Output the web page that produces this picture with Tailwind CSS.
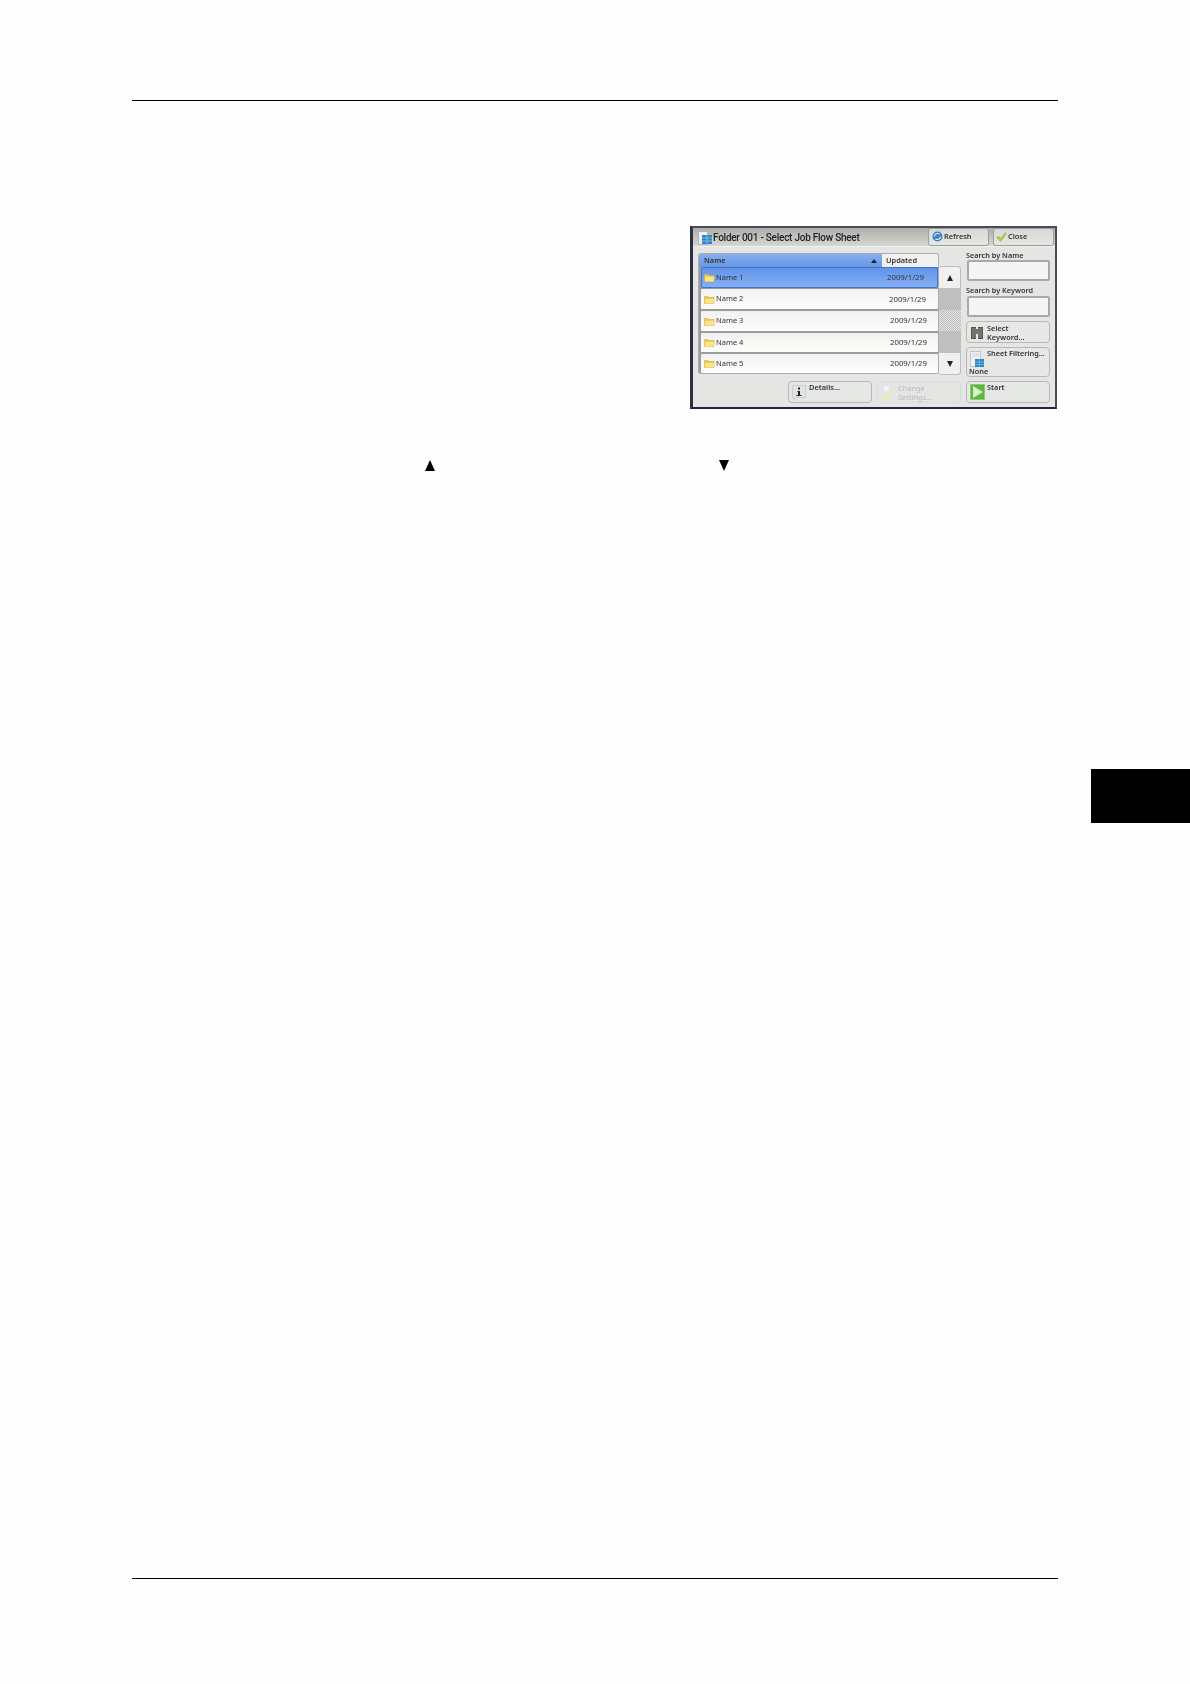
<!DOCTYPE html>
<html>
<head>
<meta charset="utf-8">
<script src="https://cdn.jsdelivr.net/npm/@tailwindcss/browser@4"></script>
</head>
<body class="bg-[#fefefe] font-['Noto_Sans',sans-serif]">
<div class="w-[1190px] h-[1684px] overflow-hidden pt-[100px] flex flex-col text-[#333]">
  <div class="ml-[132px] w-[926px] h-px shrink-0 bg-black"></div>

  <!-- device panel -->
  <div class="ml-[690px] mt-[125px] w-[367px] h-[183px] shrink-0 border-t-2 border-l-[3px] border-r-2 border-b-2 border-t-[#4a4c54] border-l-[#2c3244] border-r-[#4a4e5c] border-b-[#20263c] bg-[#e5e6e4] flex flex-col blur-[0.4px]">
    <!-- title bar -->
    <div class="h-[19px] shrink-0 flex items-center bg-gradient-to-b from-[#aeaeaa] to-[#d6d6d2] border-b border-[#f0f0ee]">
      <svg class="ml-[5px] mt-[2px] w-[15px] h-[14px] shrink-0" viewBox="0 0 15 14">
        <rect x="0.5" y="0.5" width="9" height="13" fill="#eef0f2" stroke="#b4b8bc"/>
        <rect x="4" y="4" width="10" height="9" fill="#2e86c8"/>
        <path d="M4 7h10M4 10h10M9 4v9" stroke="#7fbde6" stroke-width="1"/>
      </svg>
      <span class="mt-[2px] text-[10px] tracking-[-0.25px] leading-none font-['Roboto',sans-serif] font-medium text-[#222] whitespace-nowrap w-[215px]">Folder 001 - Select Job Flow Sheet</span>
      <div class="w-[61px] h-[18px] -mt-px rounded-[3px] border border-[#9a9ea0] bg-gradient-to-b from-[#d8d8d4] to-[#e6e6e3] flex items-center shrink-0">
        <svg class="ml-[3px] w-[11px] h-[11px] shrink-0" viewBox="0 0 11 11">
          <circle cx="5.5" cy="5.5" r="5" fill="#3f7fc4"/>
          <path d="M2.5 5.5a3 3 0 0 1 5-2.2M8.5 5.5a3 3 0 0 1-5 2.2" fill="none" stroke="#dcecf8" stroke-width="1.2"/>
        </svg>
        <span class="ml-[1px] text-[7.4px] leading-none font-semibold">Refresh</span>
      </div>
      <div class="ml-[4px] w-[61px] h-[18px] -mt-px rounded-[3px] border border-[#9a9ea0] bg-gradient-to-b from-[#d8d8d4] to-[#e6e6e3] flex items-center shrink-0">
        <svg class="ml-[2px] w-[11px] h-[10px] shrink-0" viewBox="0 0 11 10">
          <path d="M0.5 5.500 3 4.500 4.500 6.500 9.500 0.500 10.500 1.500 4.500 9.500Z" fill="#a6d04e" stroke="#7cab30" stroke-width="0.5"/>
        </svg>
        <span class="ml-[1px] text-[7.4px] leading-none font-semibold">Close</span>
      </div>
    </div>

    <!-- body -->
    <div class="flex pl-[5px] gap-[5px]">
      <!-- left column -->
      <div class="w-[263px] shrink-0 pt-[6px] flex flex-col">
        <div class="flex">
          <!-- table -->
          <div class="w-[241px] shrink-0 flex flex-col">
            <div class="h-[14px] flex rounded-t-[3px] overflow-hidden border border-b-0 border-[#adadad]">
              <div class="w-[183px] shrink-0 flex items-center justify-between bg-gradient-to-b from-[#86aeef] to-[#6797e6] pl-[5px] pr-[5px]">
                <span class="text-[7.4px] leading-none font-semibold">Name</span>
                <svg class="w-[6px] h-[4px]" viewBox="0 0 6 4"><path d="M3 0 6 4H0Z" fill="#222"/></svg>
              </div>
              <div class="flex-1 bg-[#f0f1f0] flex items-center pl-[4px]">
                <span class="text-[7.4px] leading-none font-semibold">Updated</span>
              </div>
            </div>
            <div class="h-[107px] bg-[#9c9c9c] rounded-b-[3px] pl-[2px] flex flex-col border-x border-b border-[#adadad]">
              <div class="h-[21px] shrink-0 rounded-[2px] border border-[#4274cc] bg-gradient-to-b from-[#5f93ea] to-[#86aff2] flex items-center pl-[2px]">
                <svg class="w-[11px] h-[9px] shrink-0" viewBox="0 0 11 9"><path d="M0.5 1.500h3.500l1 1h5v6h-9.500Z" fill="#f0cb58" stroke="#d3a93c" stroke-width="0.6"/><path d="M1 4h9.500l-1 4.500h-8.500Z" fill="#fbe58c"/></svg>
                <span class="ml-[1px] text-[7.5px] leading-none">Name 1</span>
                <span class="ml-auto mr-[13px] text-[7.8px] leading-none">2009/1/29</span>
              </div>
              <div class="mt-px h-[20px] shrink-0 rounded-[1px] bg-gradient-to-b from-[#f1f1ef] to-[#fdfdfc] flex items-center pl-[3px]">
                <svg class="w-[11px] h-[9px] shrink-0" viewBox="0 0 11 9"><path d="M0.5 1.500h3.500l1 1h5v6h-9.500Z" fill="#f0cb58" stroke="#d3a93c" stroke-width="0.6"/><path d="M1 4h9.500l-1 4.500h-8.500Z" fill="#fbe58c"/></svg>
                <span class="ml-[1px] text-[7.5px] leading-none">Name 2</span>
                <span class="ml-auto mr-[12px] mt-[2px] text-[7.8px] leading-none">2009/1/29</span>
              </div>
              <div class="mt-[2px] h-[20px] shrink-0 rounded-[1px] bg-gradient-to-b from-[#f1f1ef] to-[#fdfdfc] flex items-center pl-[3px]">
                <svg class="w-[11px] h-[9px] shrink-0" viewBox="0 0 11 9"><path d="M0.5 1.500h3.500l1 1h5v6h-9.500Z" fill="#f0cb58" stroke="#d3a93c" stroke-width="0.6"/><path d="M1 4h9.500l-1 4.500h-8.500Z" fill="#fbe58c"/></svg>
                <span class="ml-[1px] text-[7.5px] leading-none">Name 3</span>
                <span class="ml-auto mr-[11px] text-[7.8px] leading-none">2009/1/29</span>
              </div>
              <div class="mt-[2px] h-[19px] shrink-0 rounded-[1px] bg-gradient-to-b from-[#f1f1ef] to-[#fdfdfc] flex items-center pl-[3px]">
                <svg class="w-[11px] h-[9px] shrink-0" viewBox="0 0 11 9"><path d="M0.5 1.500h3.500l1 1h5v6h-9.500Z" fill="#f0cb58" stroke="#d3a93c" stroke-width="0.6"/><path d="M1 4h9.500l-1 4.500h-8.500Z" fill="#fbe58c"/></svg>
                <span class="ml-[1px] text-[7.5px] leading-none">Name 4</span>
                <span class="ml-auto mr-[11px] text-[7.8px] leading-none">2009/1/29</span>
              </div>
              <div class="mt-[2px] h-[19px] shrink-0 rounded-[1px] bg-gradient-to-b from-[#f1f1ef] to-[#fdfdfc] flex items-center pl-[3px]">
                <svg class="w-[11px] h-[9px] shrink-0" viewBox="0 0 11 9"><path d="M0.5 1.500h3.500l1 1h5v6h-9.500Z" fill="#f0cb58" stroke="#d3a93c" stroke-width="0.6"/><path d="M1 4h9.500l-1 4.500h-8.500Z" fill="#fbe58c"/></svg>
                <span class="ml-[1px] text-[7.5px] leading-none">Name 5</span>
                <span class="ml-auto mr-[11px] text-[7.8px] leading-none">2009/1/29</span>
              </div>
            </div>
          </div>
          <!-- scrollbar -->
          <div class="mt-[13px] w-[22px] h-[109px] shrink-0 flex flex-col">
            <div class="h-[22px] rounded-t-[3px] bg-[#eff0ef] border-t border-r border-[#bdbdbd] flex items-center justify-center">
              <svg class="w-[6px] h-[6px]" viewBox="0 0 6 6"><path d="M3 0 6 6H0Z" fill="#222"/></svg>
            </div>
            <div class="h-[22px] bg-[#bfbfbf]"></div>
            <div class="h-[21px] bg-[repeating-conic-gradient(#bcbcbc_0_25%,#e6e6e6_0_50%)] bg-[length:2px_2px]"></div>
            <div class="h-[22px] bg-[#bfbfbf]"></div>
            <div class="h-[22px] rounded-b-[3px] bg-[#eff0ef] border-b border-r border-[#bdbdbd] flex items-center justify-center">
              <svg class="w-[6px] h-[6px]" viewBox="0 0 6 6"><path d="M0 0H6L3 6Z" fill="#222"/></svg>
            </div>
          </div>
        </div>
        <!-- bottom buttons -->
        <div class="mt-[6px] flex justify-end gap-[5px]">
          <div class="w-[84px] h-[22px] rounded-[4px] border border-[#b8b8b8] bg-[#e6e8e6] flex items-start">
            <svg class="ml-[3px] mt-[3px] w-[14px] h-[16px] shrink-0" viewBox="0 0 14 16">
              <path d="M0.500 0.500H13.500V12.500H4L2 15.500V12.500H0.500Z" fill="#e2e4e4" stroke="#bcc0c0" stroke-width="0.6"/>
              <path d="M6 2.500H8V4.500H6ZM5.500 6H8V10H9.500V11H4.500V10H6V7H5.500Z" fill="#222"/>
            </svg>
            <span class="ml-[3px] mt-[2px] text-[7.4px] leading-none font-semibold">Details...</span>
          </div>
          <div class="w-[84px] h-[22px] rounded-[4px] border border-[#dadcda] bg-[#e5e6e4] flex items-start">
            <svg class="ml-[3px] mt-[3px] w-[13px] h-[16px] shrink-0" viewBox="0 0 13 16">
              <rect x="3" y="1" width="5" height="5" fill="#f2f3f2"/>
              <path d="M1 13 9 8 11 10 3 15Z" fill="#ecec9c"/>
            </svg>
            <span class="ml-[4px] mt-[2px] text-[7.4px] leading-[9px] text-[#b8bab8]">Change<br>Settings...</span>
          </div>
        </div>
      </div>

      <!-- right column -->
      <div class="w-[84px] shrink-0 flex flex-col pt-[3px]">
        <div class="h-[10px] text-[7.3px] leading-[10px] font-semibold whitespace-nowrap">Search by Name</div>
        <div class="ml-px w-[83px] h-[21px] rounded-[2px] border-2 border-[#a9aaa7] bg-[#f4f5f4]"></div>
        <div class="mt-[4px] h-[11px] text-[7.3px] leading-[11px] font-semibold whitespace-nowrap">Search by Keyword</div>
        <div class="ml-px w-[83px] h-[21px] rounded-[2px] border-2 border-[#a9aaa7] bg-[#f4f5f4]"></div>
        <div class="mt-[4px] h-[22px] rounded-[4px] border border-[#b8b8b8] bg-[#e6e8e6] flex items-start">
          <svg class="ml-[3px] mt-[4px] w-[14px] h-[13px] shrink-0" viewBox="0 0 14 13">
            <path d="M1 1h5v12H1ZM8 1h5v12H8Z" fill="#55554e"/>
            <path d="M6 3h2v5H6Z" fill="#77776f"/>
            <path d="M3 2v10M5 2v10M9 2v10M11 2v10" stroke="#a2a298" stroke-width="0.8"/>
          </svg>
          <span class="ml-[3px] mt-[2px] text-[7.4px] leading-[9px] font-semibold">Select<br>Keyword...</span>
        </div>
        <div class="mt-[4px] h-[30px] rounded-[4px] border border-[#b8b8b8] bg-[#e6e8e6] flex flex-col">
          <div class="flex items-start">
            <svg class="ml-[3px] mt-[3px] w-[15px] h-[17px] shrink-0" viewBox="0 0 15 17">
              <rect x="0.500" y="0.500" width="10" height="15" fill="#eef0f0" stroke="#b4b8ba" stroke-width="0.7"/>
              <path d="M2 3h7M2 5h7" stroke="#c4c8ca" stroke-width="0.7"/>
              <rect x="5" y="8" width="9" height="8" fill="#2e86c8"/>
              <path d="M5 11h9M5 13.500h9M9.500 8v8" stroke="#7fbde6" stroke-width="0.8"/>
            </svg>
            <span class="ml-[2px] mt-[1px] text-[7.3px] leading-[9px] font-semibold whitespace-nowrap">Sheet Filtering...</span>
          </div>
          <span class="ml-[2px] -mt-px text-[7.3px] leading-[9px] font-semibold">None</span>
        </div>
        <div class="mt-[4px] h-[22px] rounded-[4px] border border-[#b8b8b8] bg-[#e6e8e6] flex items-start">
          <svg class="ml-[3px] mt-[2px] w-[15px] h-[16px] shrink-0" viewBox="0 0 15 16">
            <rect x="0.500" y="0.500" width="14" height="15" fill="#5cb83c" stroke="#8ac57a" stroke-width="0.7"/>
            <path d="M3 2 13 8 3 14Z" fill="#d6efc6"/>
          </svg>
          <span class="ml-[2px] mt-[2px] text-[7.4px] leading-none font-semibold">Start</span>
        </div>
      </div>
    </div>
  </div>

  <!-- inline arrows -->
  <div class="ml-[425px] mt-[51px] flex gap-[284px] shrink-0">
    <svg class="w-[10px] h-[11px]" viewBox="0 0 10 11"><path d="M5 0 10 11H0Z" fill="#000"/></svg>
    <svg class="w-[10px] h-[11px]" viewBox="0 0 10 11"><path d="M0 0H10L5 11Z" fill="#000"/></svg>
  </div>

  <!-- chapter tab -->
  <div class="ml-[1091px] mt-[298px] w-[99px] h-[54px] shrink-0 bg-black"></div>

  <div class="ml-[132px] mt-[755px] w-[926px] h-px shrink-0 bg-black"></div>
</div>
</body>
</html>
